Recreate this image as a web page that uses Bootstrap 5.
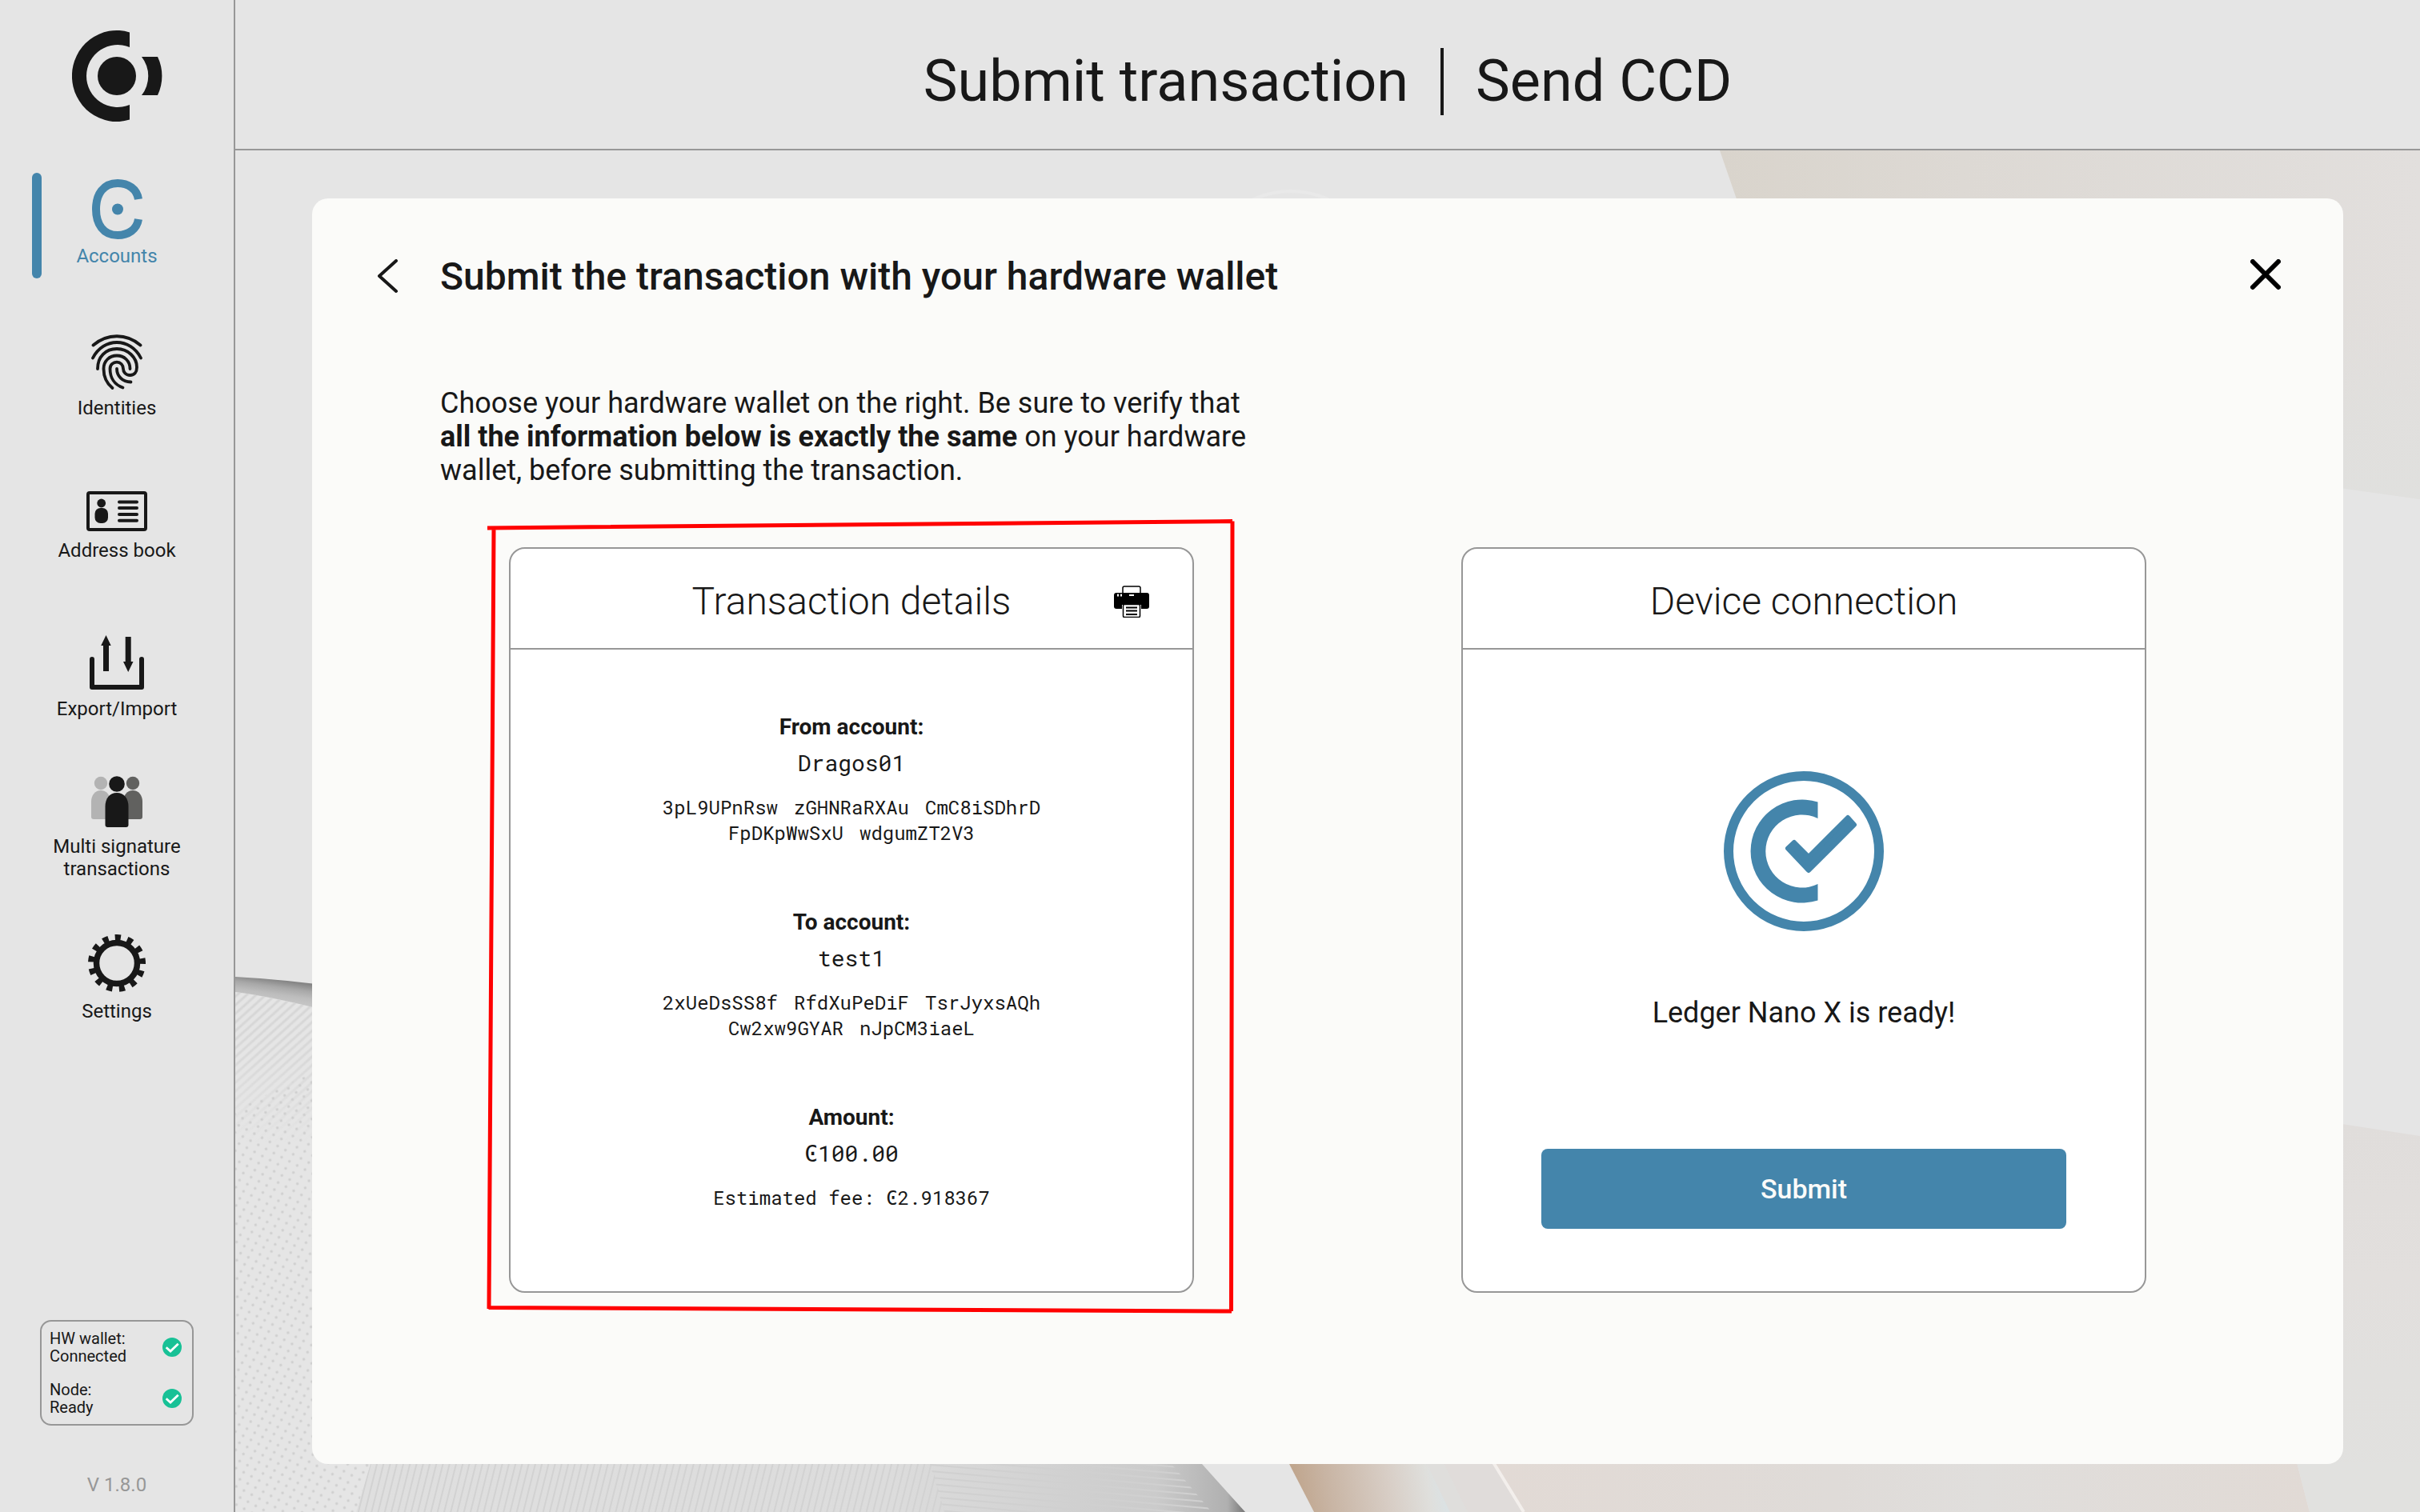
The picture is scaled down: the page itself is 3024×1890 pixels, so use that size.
<!DOCTYPE html>
<html lang="en">
<head>
<meta charset="utf-8">
<meta name="viewport" content="width=device-width, initial-scale=1">
<title>Submit transaction | Send CCD</title>
<link href="https://cdn.jsdelivr.net/npm/bootstrap@5.3.0/dist/css/bootstrap.min.css" rel="stylesheet">
<style>
:root { --ink: #181818; --line: #979797; --blue: #4485ab; --shell: #e5e5e5; --paper: #fbfbf9; }
body { font-family: Roboto, "Liberation Sans", sans-serif; color: var(--ink); background: var(--shell); }
svg { display: block; flex: none; }
.mono { font-family: "Roboto Mono", "DejaVu Sans Mono", "Liberation Mono", monospace; }

/* sidebar */
.side { width: 294px; flex: none; border-right: 2px solid var(--line); padding: 38px 50px 20px 40px; background: var(--shell); }
.side-logo { margin-left: 50px; }
.side-menu { gap: 56px; margin-top: 64px; }
.side-link { height: 132px; color: var(--ink); font-size: 24px; line-height: 28px; text-decoration: none; text-align: center; margin: 0 -10px 0 0; white-space: nowrap; }
.side-link.active { color: var(--blue); padding-bottom: 6px; position: relative; }
.side-link.active::before { content: ""; position: absolute; left: 0; top: 0; width: 12px; height: 132px; border-radius: 6px; background: var(--blue); }
.status-box { border: 2px solid var(--line); border-radius: 14px; padding: 10px 13px 10px 10px; gap: 20px; font-size: 20px; line-height: 22px; margin: 0 0 60px 10px; }
.version { color: var(--line); font-size: 24px; line-height: 28px; padding-left: 10px; }

/* top bar */
.top-bar { height: 188px; border-bottom: 2px solid var(--line); background: var(--shell); padding-bottom: 2px; padding-top: 20px; }
.top-bar h1 { font-size: 72px; line-height: 84px; font-weight: 400; }
.top-bar .rule { width: 4px; height: 84px; background: var(--ink); margin: 0 40px; }

/* work area */
.stage { padding: 60px 96px; }
.backdrop { inset: 0; width: 100%; height: 100%; }
.sheet { background: var(--paper); border-radius: 20px; padding: 70px 0 0; }
.sheet-head { padding: 0 78px 0 80px; }
.sheet-head h2 { font-size: 48px; line-height: 56px; font-weight: 500; }
.plain-btn { background: none; border: 0; padding: 0; }
.back-btn { width: 80px; }
.columns { padding: 109px 160px 0; gap: 162px; }
.intro { font-size: 36px; line-height: 42px; margin-bottom: 75px; }
.frame-wrap { margin: 0 86px; }
.tile { min-height: 932px; border: 2px solid var(--line); border-radius: 20px; background: #fff; }
.tile-head { display: grid; grid-template-columns: 1fr auto 1fr; align-items: center; height: 126px; border-bottom: 2px solid var(--line); padding: 8px 54px 0; }
.tile-head h3 { font-size: 48px; line-height: 56px; font-weight: 300; }
.details { padding-top: 79px; gap: 78px; }
.details h4 { font-size: 28px; line-height: 36px; font-weight: 700; margin: 0 0 9px; }
.details .main-line { font-size: 28px; line-height: 36px; margin-bottom: 21px; }
.details .sub-line { font-size: 24px; line-height: 32px; }
.address { width: 500px; column-gap: 20px; }
.device { padding: 152px 98px 78px; }
.device p { font-size: 36px; line-height: 42px; margin: 81px 0 149px; }
.submit-btn { --bs-btn-bg: var(--blue); --bs-btn-hover-bg: #3a7597; --bs-btn-color: var(--paper); --bs-btn-hover-color: var(--paper); height: 100px; border-radius: 8px; font-size: 34px; line-height: 42px; font-weight: 500; border: 0; }
.marker { left: -32px; top: -40px; width: calc(100% + 88px); height: calc(100% + 70px); pointer-events: none; }
</style>
</head>
<body>
<div class="d-flex min-vh-100">

  <nav class="side d-flex flex-column" aria-label="Main">
    <a href="#" class="side-logo d-block" aria-label="Home">
      <svg width="114" height="114" viewBox="0 0 114 114" fill="#181818">
        <circle cx="56" cy="57" r="24"/>
        <path d="M72 2.400A56 57 0 1 0 72 111.600V93A39 39 0 1 1 72 21z"/>
        <path d="M87 33H107A56 56 0 0 1 107 81H87A39 39 0 0 0 87 33z"/>
      </svg>
    </a>
    <div class="side-menu d-flex flex-column">
      <a href="#" class="side-link active d-flex flex-column align-items-center justify-content-center" aria-current="page">
        <svg width="64" height="82" viewBox="0 0 64 82"><path d="M59 25C57 12 46 5 33 5C15 5 6 19 6 37.500S15 70 33 70C46 70 57 63 59 50" fill="none" stroke="#4485ab" stroke-width="10"/><circle cx="33" cy="37.500" r="7" fill="#4485ab"/></svg>
        Accounts
      </a>
      <a href="#" class="side-link d-flex flex-column align-items-center justify-content-center">
        <svg width="64" height="80" viewBox="0 0 64 80" fill="none" stroke="#181818" stroke-width="3.800" stroke-linecap="round">
          <path d="M2.500 15.500C20 .5 44 .5 61.500 15.500"/>
          <path d="M2 31.500C15 5.500 49 5.500 62 31.500"/>
          <path d="M8 45C8 30 18 20 32 20S57 31 57 43C57 49 54 53 48.500 53S40 49 40 45C40 40 36.500 36.700 32 36.700S23.500 40 23.500 45C23.500 56 29 65 39.500 68.500"/>
          <path d="M48.500 45C48.500 35 41 28.500 32 28.500S15.500 35 15.500 45C15.500 54 19 63 26.500 69"/>
          <path d="M32 45C32 54 39 61.500 49.500 61.500"/>
        </svg>
        Identities
      </a>
      <a href="#" class="side-link d-flex flex-column align-items-center justify-content-center">
        <svg width="76" height="60" viewBox="0 0 76 60"><rect x="2" y="2" width="72" height="46" rx="2" fill="none" stroke="#181818" stroke-width="4"/><circle cx="18.700" cy="15" r="5.400" fill="#181818"/><rect x="10.500" y="21" width="16.500" height="19" rx="7" fill="#181818"/><path d="M41 13.500H63M41 21H63M41 29H63M41 36.700H63" stroke="#181818" stroke-width="4" stroke-linecap="round"/></svg>
        Address book
      </a>
      <a href="#" class="side-link d-flex flex-column align-items-center justify-content-center">
        <svg width="68" height="80" viewBox="0 0 68 80"><path d="M3 32V67H65V32" fill="none" stroke="#181818" stroke-width="6" stroke-linecap="round" stroke-linejoin="round"/><path d="M20.500 2L26.700 15H24V47H17V15H14.200zM44.700 4H51.700V35H54.500L48.200 48L42 35H44.700z" fill="#181818"/></svg>
        Export/Import
      </a>
      <a href="#" class="side-link d-flex flex-column align-items-center justify-content-center">
        <svg width="64" height="76" viewBox="0 0 64 76"><g fill="#b3b3b3"><circle cx="12" cy="11" r="8.200"/><path d="M0 53V34C0 26 5 20 12 20S24 26 24 34V56H3Q0 56 0 53z"/></g><g fill="#61615f"><circle cx="52" cy="11" r="8.200"/><path d="M64 53V34C64 26 59 20 52 20S40 26 40 34V56H61Q64 56 64 53z"/></g><g fill="#181818"><circle cx="32" cy="12" r="9.800"/><path d="M17.500 63V40C17.500 30 23 23 32 23S46.500 30 46.500 40V63Q46.500 66 43.500 66H20.500Q17.500 66 17.500 63z"/></g></svg>
        <span>Multi signature<br>transactions</span>
      </a>
      <a href="#" class="side-link d-flex flex-column align-items-center justify-content-center">
        <svg width="72" height="84" viewBox="0 0 72 84" fill="none" stroke="#181818"><circle cx="36" cy="38" r="25.500" stroke-width="7.500"/><circle cx="36" cy="38" r="32" stroke-width="8" pathLength="130" stroke-dasharray="4.600 5.400" transform="rotate(-94 36 38)"/></svg>
        Settings
      </a>
    </div>
    <div class="status-box d-flex flex-column mt-auto">
      <div class="d-flex justify-content-between align-items-center">
        <div>HW wallet:<br>Connected</div>
        <svg width="24" height="24" viewBox="0 0 24 24" role="img" aria-label="OK"><circle cx="12" cy="12" r="12" fill="#18c196"/><path d="M4.700 12.300L10 17L19.700 7.800" fill="none" stroke="#fff" stroke-width="2.800"/></svg>
      </div>
      <div class="d-flex justify-content-between align-items-center">
        <div>Node:<br>Ready</div>
        <svg width="24" height="24" viewBox="0 0 24 24" role="img" aria-label="OK"><circle cx="12" cy="12" r="12" fill="#18c196"/><path d="M4.700 12.300L10 17L19.700 7.800" fill="none" stroke="#fff" stroke-width="2.800"/></svg>
      </div>
    </div>
    <div class="version text-center">V 1.8.0</div>
  </nav>

  <div class="d-flex flex-column flex-grow-1">
    <header class="top-bar d-flex align-items-center justify-content-center">
      <h1 class="m-0">Submit transaction</h1>
      <div class="rule"></div>
      <h1 class="m-0">Send CCD</h1>
    </header>

    <main class="stage d-flex flex-column flex-grow-1 position-relative">
      <svg class="backdrop position-absolute" viewBox="0 0 2730 1702" preserveAspectRatio="none" aria-hidden="true">
        <defs>
          <linearGradient id="sand" x1="0" x2="1"><stop offset="0" stop-color="#d9d4cc"/><stop offset=".35" stop-color="#ddd9d4"/><stop offset="1" stop-color="#e2dfdd"/></linearGradient>
          <linearGradient id="sandFade" x1="0" x2="0" y1="0" y2="1"><stop offset="0" stop-color="#e0e0de" stop-opacity="0"/><stop offset="1" stop-color="#e0e0de"/></linearGradient>
          <linearGradient id="gold" gradientUnits="userSpaceOnUse" x1="1325" x2="1515" y1="1670" y2="1640"><stop offset="0" stop-color="#c0a68e"/><stop offset=".2" stop-color="#c8b4a3"/><stop offset=".6" stop-color="#d8cec6"/><stop offset=".85" stop-color="#dfdfdc"/><stop offset=".95" stop-color="#dbe2e4"/><stop offset="1" stop-color="#e0dcd9"/></linearGradient>
          <linearGradient id="blush" x1="0" x2="1"><stop offset="0" stop-color="#e2dad5"/><stop offset=".42" stop-color="#dfdbd8"/><stop offset=".6" stop-color="#e0dedc"/><stop offset="1" stop-color="#e1dad5"/></linearGradient>
          <linearGradient id="fold" x1="0" x2="1"><stop offset="0" stop-color="#dfdfdf"/><stop offset=".6" stop-color="#dcdcdc"/><stop offset=".9" stop-color="#cbcbcb"/><stop offset=".98" stop-color="#b0b0b0"/><stop offset="1" stop-color="#777"/></linearGradient>
          <linearGradient id="lip" gradientUnits="userSpaceOnUse" x1="48" y1="1036" x2="43" y2="1072"><stop offset="0" stop-color="#848484"/><stop offset=".25" stop-color="#a8a8a8"/><stop offset=".5" stop-color="#bdbdbd"/><stop offset="1" stop-color="#cfcfcf"/></linearGradient>
          <linearGradient id="edge" x1="0" x2="0" y1="0" y2="1"><stop offset="0" stop-color="#e0dddb"/><stop offset=".4" stop-color="#e2dfdd"/><stop offset=".65" stop-color="#e1e0de"/><stop offset="1" stop-color="#e1e1df"/></linearGradient>
          <linearGradient id="fadeDown" x1="0" x2="0" y1="0" y2="1"><stop offset="0" stop-color="#fff"/><stop offset=".5" stop-color="#bbb"/><stop offset="1" stop-color="#000"/></linearGradient>
          <mask id="hatchMask" maskUnits="userSpaceOnUse" x="0" y="1040" width="140" height="200"><rect y="1040" width="140" height="200" fill="url(#fadeDown)"/></mask>
          <pattern id="hatch" width="8" height="8" patternUnits="userSpaceOnUse" patternTransform="rotate(48)"><path d="M2 0V8" stroke="#d4d4d4" stroke-width="3"/></pattern>
          <pattern id="dots" width="11" height="10" patternUnits="userSpaceOnUse" patternTransform="rotate(28)"><circle cx="4" cy="4" r="1.700" fill="#cfcfcf"/></pattern>
          <pattern id="weave" width="8" height="9" patternUnits="userSpaceOnUse" patternTransform="rotate(14)"><path d="M1 0V9" stroke="#d2d2d2" stroke-width="2"/></pattern>
          <pattern id="grid" width="12" height="8" patternUnits="userSpaceOnUse" patternTransform="rotate(5)"><path d="M0 1H12" stroke="#d0d0d0" stroke-width="2"/></pattern>
        </defs>
        <circle cx="1319" cy="164" r="113" fill="none" stroke="#e9e9e9" stroke-width="4"/>
        <path d="M1855 0H2730V436L2634 422L2000 420z" fill="url(#sand)"/>
        <path d="M2600 200H2730V436L2600 418z" fill="url(#sandFade)"/>
        <path d="M2600 1212L2730 1232V1702H2600z" fill="url(#edge)"/>
        <path d="M0 1033Q60 1036 140 1047V1100H0z" fill="url(#lip)"/>
        <path d="M0 1052Q50 1058 140 1082V1702H0z" fill="#e5e5e5"/>
        <path d="M0 1052Q50 1058 140 1082V1240H0z" fill="url(#hatch)" mask="url(#hatchMask)"/>
        <path d="M0 1200L140 1130V1642H169L151 1702H0z" fill="url(#dots)"/>
        <path d="M169 1642H1208L1262 1702H151z" fill="url(#fold)"/>
        <path d="M169 1642H870L886 1702H151z" fill="url(#weave)"/>
        <path d="M868 1642H1170L1220 1702H886z" fill="url(#grid)"/>
        <path d="M1316 1640H1488L1520 1702H1348z" fill="url(#gold)"/>
        <path d="M1496 1640H1572L1610 1702H1528z" fill="#e0dcda"/>
        <path d="M1488 1640H1510L1540 1702H1518z" fill="#dfdedc"/>
        <path d="M1572 1640H2576L2592 1702H1610z" fill="url(#blush)"/>
        <path d="M1572 1640L1610 1702" stroke="#f3efec" stroke-width="4"/>
        <path d="M2576 1640H2730V1702H2592z" fill="#e1e1df"/>
      </svg>

      <section class="sheet flex-grow-1 position-relative">
        <div class="sheet-head d-flex align-items-center">
          <button type="button" class="plain-btn back-btn" aria-label="Back"><svg width="28" height="44" viewBox="0 0 28 44"><path d="M25 2L4 21L25 40" fill="none" stroke="#181818" stroke-width="4" stroke-linecap="round" stroke-linejoin="round"/></svg></button>
          <h2 class="m-0 flex-grow-1">Submit the transaction with your hardware wallet</h2>
          <button type="button" class="plain-btn" aria-label="Close"><svg width="38" height="44" viewBox="0 0 38 44"><path d="M3 3L35 35M35 3L3 35" stroke="#000" stroke-width="6" stroke-linecap="round"/></svg></button>
        </div>

        <div class="columns d-flex align-items-end">
          <div class="flex-fill w-50">
            <p class="intro">Choose your hardware wallet on the right. Be sure to verify that <b>all the information below is exactly the same</b> on your hardware wallet, before submitting the transaction.</p>
            <div class="frame-wrap position-relative">
              <article class="tile">
                <header class="tile-head">
                  <span></span>
                  <h3 class="m-0">Transaction details</h3>
                  <button type="button" class="plain-btn ms-auto" aria-label="Print">
                    <svg width="44" height="40" viewBox="0 0 44 40"><rect x="11" y="1" width="22" height="14" rx="2" fill="#fff" stroke="#000" stroke-width="1.500"/><rect y="9" width="44" height="20" rx="3"/><path d="M5 10.500v3M9 10.500v3M19 12h6" stroke="#fff" stroke-width="2"/><path d="M10 24H34V30H10z" fill="#fff"/><rect x="11.500" y="23.500" width="21" height="16" rx="1.500" fill="#fff" stroke="#000" stroke-width="1.500"/><path d="M15 27.500H29M15 31.500H29M15 36H29" stroke="#000" stroke-width="2"/></svg>
                  </button>
                </header>
                <div class="details d-flex flex-column align-items-center text-center">
                  <div>
                    <h4>From account:</h4>
                    <div class="mono main-line">Dragos01</div>
                    <div class="mono sub-line address d-flex flex-wrap justify-content-center"><span>3pL9UPnRsw</span><span>zGHNRaRXAu</span><span>CmC8iSDhrD</span><span>FpDKpWwSxU</span><span>wdgumZT2V3</span></div>
                  </div>
                  <div>
                    <h4>To account:</h4>
                    <div class="mono main-line">test1</div>
                    <div class="mono sub-line address d-flex flex-wrap justify-content-center"><span>2xUeDsSS8f</span><span>RfdXuPeDiF</span><span>TsrJyxsAQh</span><span>Cw2xw9GYAR</span><span>nJpCM3iaeL</span></div>
                  </div>
                  <div>
                    <h4>Amount:</h4>
                    <div class="mono main-line">Ͼ100.00</div>
                    <div class="mono sub-line">Estimated fee: Ͼ2.918367</div>
                  </div>
                </div>
              </article>
              <!-- hand-drawn red marker around the details card -->
              <svg class="marker position-absolute" viewBox="0 0 944 1002" preserveAspectRatio="none" aria-hidden="true"><path d="M5 16L936 7.500M13 16L7 992M936 7.500L934.500 995M6.500 990.500L935 995" fill="none" stroke="#f00" stroke-width="5"/></svg>
            </div>
          </div>

          <div class="flex-fill w-50">
            <div class="frame-wrap">
              <article class="tile">
                <header class="tile-head">
                  <span></span>
                  <h3 class="m-0">Device connection</h3>
                  <span></span>
                </header>
                <div class="device d-flex flex-column align-items-center">
                  <svg width="200" height="200" viewBox="0 0 200 200" role="img" aria-label="Connected"><circle cx="100" cy="100" r="94" fill="none" stroke="#4485ab" stroke-width="12"/><path d="M117.500 38.500A64.500 64.500 0 1 0 117.500 161.500V141A45.500 45.500 0 1 1 117.500 59z" fill="#4485ab"/><path d="M80 96.500L88 89L106 107L155 58L163 67L106 124z" fill="#4485ab" stroke="#4485ab" stroke-width="6" stroke-linejoin="round"/></svg>
                  <p>Ledger Nano X is ready!</p>
                  <button type="button" class="btn submit-btn w-100">Submit</button>
                </div>
              </article>
            </div>
          </div>
        </div>
      </section>
    </main>
  </div>
</div>
<script src="https://cdn.jsdelivr.net/npm/bootstrap@5.3.0/dist/js/bootstrap.bundle.min.js"></script>
</body>
</html>
